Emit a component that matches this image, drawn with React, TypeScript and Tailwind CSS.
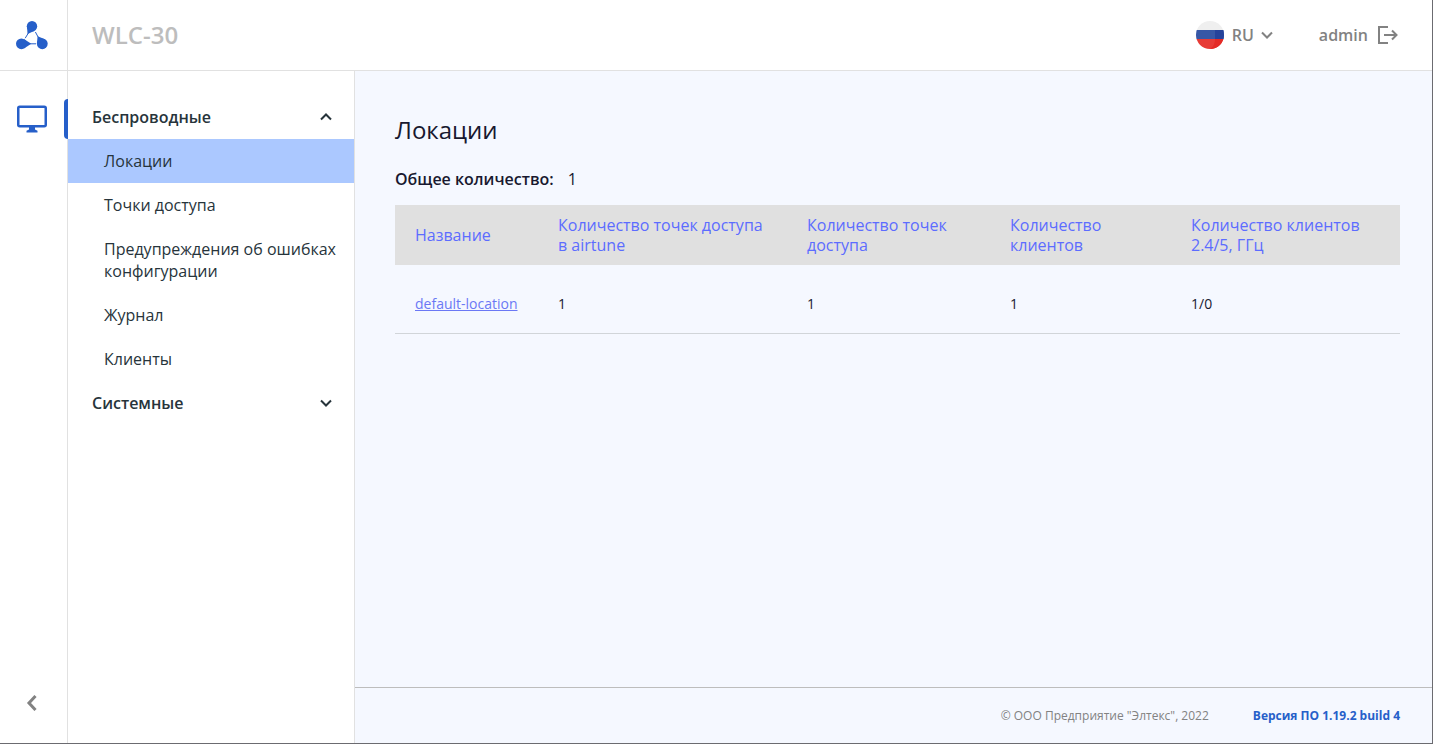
import { useState } from 'react';
import { clsx } from 'clsx';

type NavItem = { id: string; label: string };
type NavGroup = { id: string; label: string; items: NavItem[] };

const NAV: NavGroup[] = [
  {
    id: 'wireless',
    label: 'Беспроводные',
    items: [
      { id: 'locations', label: 'Локации' },
      { id: 'aps', label: 'Точки доступа' },
      { id: 'config-errors', label: 'Предупреждения об ошибках конфигурации' },
      { id: 'journal', label: 'Журнал' },
      { id: 'clients', label: 'Клиенты' },
    ],
  },
  { id: 'system', label: 'Системные', items: [] },
];

const COLUMNS = [
  { label: 'Название', width: 'w-[143px]' },
  { label: 'Количество точек доступа в airtune', width: 'w-[249px]' },
  { label: 'Количество точек доступа', width: 'w-[203px]' },
  { label: 'Количество клиентов', width: 'w-[181px]' },
  { label: 'Количество клиентов 2.4/5, ГГц', width: '' },
];

const LOCATIONS = [{ name: 'default-location', airtune: 1, aps: 1, clients: 1, bands: '1/0' }];

function Logo() {
  return (
    <svg width="32" height="29" viewBox="0 0 32 29" fill="#265fc9" aria-hidden="true">
      <circle cx="16" cy="5.2" r="5.2" />
      <circle cx="5.4" cy="22.8" r="5.4" />
      <circle cx="26.3" cy="22.8" r="5.4" />
      <path d="M10.9 5.5 11.6 13 18.5 9.8Z" />
      <path d="M21.6 15.2 20.9 22.8 29.5 18.5Z" />
      <path d="M8 18 15.2 22.8 8 27.5Z" />
      <path
        d="M13 11 9.2 17.2M19.4 11 22.2 16.2M13 22.8h7"
        fill="none"
        stroke="#265fc9"
        strokeWidth="1"
      />
    </svg>
  );
}

function MonitorIcon() {
  return (
    <svg width="30" height="28" viewBox="0 0 30 28" fill="none" aria-hidden="true">
      <rect x="1.25" y="1.75" width="27.5" height="19.5" rx="1.5" stroke="#265fc9" strokeWidth="2.5" />
      <path d="M12 22h6v2.5l2.5 1.2V27.5h-11V25.7L12 24.5Z" fill="#265fc9" />
    </svg>
  );
}

function FlagIcon() {
  return (
    <svg width="28" height="28" viewBox="0 0 28 28" aria-hidden="true">
      <clipPath id="flag">
        <circle cx="14" cy="14" r="14" />
      </clipPath>
      <g clipPath="url(#flag)">
        <path fill="#efefef" d="M0 0h28v9H0z" />
        <path fill="#3757a6" d="M0 9h28v9H0z" />
        <path fill="#e73b36" d="M0 18h28v10H0z" />
        <path fill="#26439b" d="M19 9h9v9h-9z" />
        <path fill="#e42b26" d="M19 18h9v10H14q5-3 5-10z" />
      </g>
    </svg>
  );
}

function Chevron({ up = false }: { up?: boolean }) {
  return (
    <svg width="12" height="8" viewBox="0 0 12 8" fill="none" stroke="currentColor" strokeWidth="2" aria-hidden="true">
      <path d={up ? 'M1 6.5 6 1.5l5 5' : 'M1 1.5 6 6.5l5-5'} />
    </svg>
  );
}

function Header() {
  return (
    <header className="flex h-[71px] shrink-0 items-center border-b border-[#e1e1e1]">
      <a
        href="#home"
        aria-label="WLC-30"
        className="flex w-[68px] shrink-0 items-center self-stretch border-r border-[#e1e1e1] pl-4"
      >
        <Logo />
      </a>
      <span className="flex-1 pl-6 text-2xl font-semibold text-[#bdbdbd]">WLC-30</span>
      <button type="button" className="flex items-center text-base font-semibold text-[#828282]">
        <FlagIcon />
        <span className="pr-[7px] pl-2">RU</span>
        <Chevron />
      </button>
      <button
        type="button"
        className="mr-[34px] ml-[46px] flex items-center gap-2 text-base font-semibold text-[#828282]"
      >
        admin
        <svg width="22" height="20" viewBox="0 0 22 20" fill="none" stroke="currentColor" strokeWidth="2" aria-hidden="true">
          <path d="M12 2H3v16h9M8 10h12M16 5.5l4.5 4.5-4.5 4.5" />
        </svg>
      </button>
    </header>
  );
}

function Rail() {
  return (
    <div className="flex w-[68px] shrink-0 flex-col justify-between border-r border-[#e1e1e1] pt-7">
      <button
        type="button"
        aria-label="Мониторинг"
        className="-mr-px flex h-10 items-center justify-between pl-[17px]"
      >
        <MonitorIcon />
        <span className="h-10 w-1 rounded-l bg-[#265fc9]" />
      </button>
      <button type="button" aria-label="Свернуть меню" className="flex h-20 items-center pl-[26px] text-[#828282]">
        <svg width="12" height="16" viewBox="0 0 12 16" fill="none" stroke="currentColor" strokeWidth="3" aria-hidden="true">
          <path d="M9.5 1 3 8l6.5 7" />
        </svg>
      </button>
    </div>
  );
}

function Sidebar() {
  const [open, setOpen] = useState<string | null>('wireless');
  const [active, setActive] = useState('locations');

  return (
    <nav className="w-[287px] shrink-0 border-r border-[#e1e1e1] pt-6 text-base leading-[22px] text-[#27343b]">
      {NAV.map((group) => (
        <div key={group.id}>
          <button
            type="button"
            aria-expanded={open === group.id}
            onClick={() => setOpen(open === group.id ? null : group.id)}
            className="flex w-full items-center justify-between py-[11px] pr-[22px] pl-6 font-semibold"
          >
            {group.label}
            <Chevron up={open === group.id} />
          </button>
          {open === group.id &&
            group.items.map((item) => (
              <a
                key={item.id}
                href={`#${item.id}`}
                onClick={() => setActive(item.id)}
                className={clsx('block py-[11px] pr-3 pl-9', active === item.id && 'bg-[#abc8ff]')}
              >
                {item.label}
              </a>
            ))}
        </div>
      ))}
    </nav>
  );
}

function LocationsTable() {
  return (
    <table className="w-full table-fixed text-left">
      <thead className="bg-[#e0e0e0] text-base leading-5 text-[#5c6cff]">
        <tr>
          {COLUMNS.map((c) => (
            <th key={c.label} scope="col" className={clsx('py-2.5 pr-5 pl-5 font-normal', c.width)}>
              {c.label}
            </th>
          ))}
        </tr>
      </thead>
      <tbody className="text-sm leading-5 text-[#18182f]">
        {LOCATIONS.map((l) => (
          <tr key={l.name} className="border-b border-[#d1d5d9]">
            <td className="pt-[29px] pb-[19px] pl-5">
              <a href={`#${l.name}`} className="text-[#6b78f5] underline">
                {l.name}
              </a>
            </td>
            <td className="pt-[29px] pb-[19px] pl-5">{l.airtune}</td>
            <td className="pt-[29px] pb-[19px] pl-5">{l.aps}</td>
            <td className="pt-[29px] pb-[19px] pl-5">{l.clients}</td>
            <td className="pt-[29px] pb-[19px] pl-5">{l.bands}</td>
          </tr>
        ))}
      </tbody>
    </table>
  );
}

export default function App() {
  return (
    <div className="flex min-h-screen flex-col border-r border-b border-[#6b6b70] bg-white font-['Open_Sans','Noto_Sans',sans-serif]">
      <Header />
      <div className="flex flex-1">
        <Rail />
        <Sidebar />
        <div className="flex min-w-0 flex-1 flex-col bg-[#f5f8ff]">
          <main className="flex-1 pt-11 pr-8 pl-10 text-[#18182f]">
            <h1 className="text-2xl leading-[30px]">Локации</h1>
            <p className="pt-[22px] pb-3.5 text-base leading-6">
              <span className="pr-3.5 font-semibold">Общее количество:</span>1
            </p>
            <LocationsTable />
          </main>
          <footer className="flex h-14 items-center justify-end gap-11 border-t border-[#bdbdbd] pr-8 text-xs">
            <span className="text-[#828282]">© ООО Предприятие "Элтекс", 2022</span>
            <span className="font-bold text-[#265fc9]">Версия ПО 1.19.2 build 4</span>
          </footer>
        </div>
      </div>
    </div>
  );
}
